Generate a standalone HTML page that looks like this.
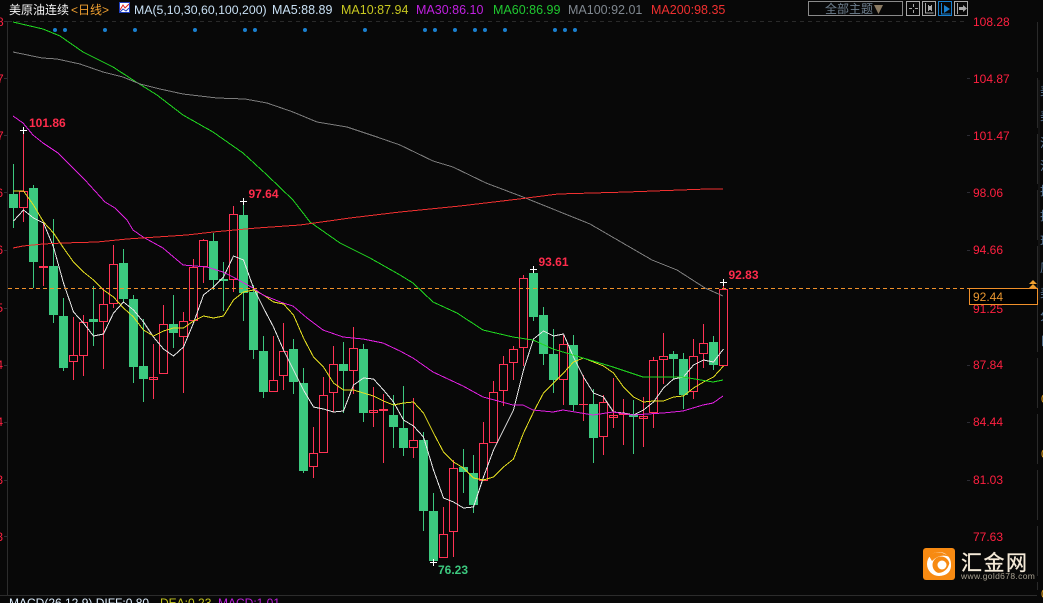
<!DOCTYPE html>
<html><head><meta charset="utf-8"><style>
html,body{margin:0;padding:0;background:#080808;width:1043px;height:603px;overflow:hidden}
svg{display:block;font-family:"Liberation Sans","Noto Sans CJK SC",sans-serif}
.ax{fill:#ff2040;font-size:12px}
.bl{fill:#ff2c4c;font-size:12px;font-weight:bold}
.h{font-size:12.5px}
.cj{font-size:12px;fill:#5a7a9a}
</style></head><body>
<svg width="1043" height="603" viewBox="0 0 1043 603" xmlns="http://www.w3.org/2000/svg">
<rect width="1043" height="603" fill="#080808"/>
<g shape-rendering="crispEdges">
<path d="M7.5 21V595" stroke="#2c2c2c" fill="none"/>
<path d="M0 595.5H1037" stroke="#2c2c2c" fill="none"/>
<path d="M8 21.5H968" stroke="#2a2a2a" stroke-dasharray="4 4" fill="none"/>
<path d="M1037.5 22V590" stroke="#2a2a2a" stroke-dasharray="50 6" fill="none"/>
<path d="M1039 80V300" stroke="#1c1c1c" fill="none"/>
<path d="M4 21.5h3M4 78.5h3M4 135.5h3M4 192.5h3M4 250.5h3M4 308.5h3M4 365.5h3M4 422.5h3M4 480.5h3M4 536.5h3M967 78.5h3M967 135.5h3M967 192.5h3M967 250.5h3M967 365.5h3M967 422.5h3M967 480.5h3" stroke="#2c2c34" fill="none"/>
<!-- green wicks -->
<path stroke="#3cc97f" fill="none" d="M13.5 164V228M33.5 185V288M53.5 219V323M63.5 298V371M93.5 286V346M123.5 249V302M133.5 295V383M143.5 319V402M173.5 295V348M213.5 233V290M223.5 262V311M243.5 201V321M253.5 285V359M263.5 336V398M293.5 339V394M303.5 368V473M343.5 342V413M363.5 344V422M393.5 395V448M403.5 386V456M423.5 432V531M433.5 493V561M463.5 449V493M473.5 455V513M533.5 269V321M543.5 307V365M553.5 329V393M573.5 335V411M593.5 389V463M633.5 400V454M673.5 351V379M683.5 353V409M713.5 336V370"/>
<!-- green bodies -->
<path fill="#3cc97f" d="M9 194h9v14h-9zM29 188h9v74h-9zM49 266h9v49h-9zM59 316h9v52h-9zM89 319h9v3h-9zM119 263h9v36h-9zM129 299h9v68h-9zM139 366h9v13h-9zM169 324h9v9h-9zM209 241h9v39h-9zM219 279h9v2h-9zM239 215h9v78h-9zM249 292h9v58h-9zM259 351h9v41h-9zM289 349h9v33h-9zM299 383h9v88h-9zM339 364h9v7h-9zM359 349h9v64h-9zM389 415h9v12h-9zM399 428h9v20h-9zM419 440h9v71h-9zM429 511h9v50h-9zM459 467h9v5h-9zM469 473h9v32h-9zM529 273h9v44h-9zM539 315h9v39h-9zM549 354h9v26h-9zM569 345h9v60h-9zM589 404h9v34h-9zM629 414h9v3h-9zM669 354h9v5h-9zM679 359h9v36h-9zM709 342h9v23h-9z"/>
<!-- red wicks -->
<path stroke="#ff3355" fill="none" d="M23.5 130V191M23.5 208V222M43.5 222V286M73.5 317V355M73.5 362V380M83.5 315V322M83.5 356V376M103.5 288V304M103.5 322V369M113.5 245V264M113.5 304V308M153.5 344V399M163.5 305V324M183.5 312V321M183.5 337V393M193.5 259V267M203.5 239V240M203.5 267V283M233.5 206V214M233.5 280V292M273.5 336V380M283.5 323V351M283.5 376V390M313.5 427V453M313.5 467V478M323.5 377V395M333.5 346V364M333.5 393V412M353.5 327V348M353.5 371V394M373.5 387V427M383.5 394V463M413.5 398V440M413.5 448V458M443.5 507V534M453.5 460V468M453.5 532V557M483.5 422V443M493.5 381V392M503.5 356V364M503.5 391V406M513.5 346V349M513.5 363V380M523.5 275V278M523.5 348V366M563.5 335V344M563.5 380V405M583.5 375V421M603.5 395V402M603.5 437V455M613.5 378V428M623.5 399V445M643.5 397V447M653.5 357V360M653.5 413V428M663.5 333V356M663.5 359V384M693.5 339V356M693.5 392V399M703.5 324V343M703.5 354V368M723.5 282V289"/>
<!-- red hollow bodies -->
<path stroke="#ff3355" fill="none" d="M19.5 191.5h8v16h-8zM69.5 355.5h8v6h-8zM79.5 322.5h8v33h-8zM99.5 304.5h8v17h-8zM109.5 264.5h8v39h-8zM149.5 377.5h8v2h-8zM159.5 324.5h8v49h-8zM179.5 321.5h8v15h-8zM189.5 267.5h8v53h-8zM199.5 240.5h8v26h-8zM229.5 214.5h8v65h-8zM269.5 380.5h8v11h-8zM279.5 351.5h8v24h-8zM309.5 453.5h8v13h-8zM319.5 395.5h8v57h-8zM329.5 364.5h8v28h-8zM349.5 348.5h8v22h-8zM369.5 410.5h8v2h-8zM379.5 409.5h8v1h-8zM409.5 440.5h8v7h-8zM439.5 534.5h8v23h-8zM449.5 468.5h8v63h-8zM479.5 443.5h8v37h-8zM489.5 392.5h8v50h-8zM499.5 364.5h8v26h-8zM509.5 349.5h8v13h-8zM519.5 278.5h8v69h-8zM559.5 344.5h8v35h-8zM599.5 402.5h8v34h-8zM609.5 415.5h8v2h-8zM639.5 416.5h8v2h-8zM649.5 360.5h8v52h-8zM659.5 356.5h8v3h-8zM689.5 356.5h8v35h-8zM699.5 343.5h8v10h-8zM719.5 289.5h8v76h-8z"/>
<!-- red filled thin -->
<path fill="#ff3355" d="M39 266h9v2h-9zM579 404h9v1h-9zM619 413h9v2h-9z"/>
<!-- MA lines -->
<g fill="none">
<polyline stroke="#e8e8e8" points="13.5,221 23.5,210 33.5,218 43.5,223 53.5,247 63.5,283 73.5,312 83.5,323 93.5,336 103.5,334 113.5,313 123.5,302 133.5,310 143.5,322 153.5,337 163.5,349 173.5,356 183.5,347 193.5,323 203.5,295 213.5,287 223.5,277 233.5,256 243.5,260 253.5,288 263.5,308 273.5,327 283.5,350 293.5,370 303.5,390 313.5,407 323.5,409 333.5,412 343.5,411 353.5,385 363.5,378 373.5,379 383.5,390 393.5,402 403.5,420 413.5,426 423.5,437 433.5,470 443.5,498 453.5,502 463.5,508 473.5,507 483.5,477 493.5,450 503.5,430 513.5,410 523.5,370 533.5,339 543.5,331 553.5,336 563.5,334 573.5,357 583.5,377 593.5,393 603.5,397 613.5,412 623.5,413 633.5,415 643.5,410 653.5,402 663.5,388 673.5,379 683.5,377 693.5,365 703.5,360 713.5,362 723.5,349"/>
<polyline stroke="#e6e020" points="13.5,191 23.5,191 33.5,205 43.5,222 53.5,233 63.5,248 73.5,262 83.5,272 93.5,280 103.5,290 113.5,297 123.5,308 133.5,317 143.5,330 153.5,336 163.5,331 173.5,328 183.5,328 193.5,321 203.5,316 213.5,318 223.5,316 233.5,300 243.5,292 253.5,290 263.5,295 273.5,302 283.5,304 293.5,315 303.5,338 313.5,357 323.5,367 333.5,383 343.5,390 353.5,390 363.5,393 373.5,396 383.5,401 393.5,405 403.5,403 413.5,402 423.5,413 433.5,433 443.5,452 453.5,462 463.5,468 473.5,478 483.5,480 493.5,477 503.5,467 513.5,459 523.5,433 533.5,412 543.5,393 553.5,383 563.5,373 573.5,362 583.5,358 593.5,362 603.5,366 613.5,373 623.5,387 633.5,397 643.5,402 653.5,401 663.5,401 673.5,397 683.5,396 693.5,388 703.5,382 713.5,377 723.5,366"/>
<polyline stroke="#e020e0" points="13,116 23,123 33,135 43,143 58,153 70,165 85,180 105,202 115,208 127,220 133,230 143,237 163,248 183,265 207,267 223,272 233,277 253,288 263,295 283,303 293,306 307,318 323,330 343,337 363,339 383,343 400,351 413,358 433,372 463,386 483,397 513,405 523,405 533,410 553,412 563,410 593,415 613,412 633,415 663,413 683,411 703,405 713,403 723,396"/>
<polyline stroke="#20d820" points="13,22 43,29 60,36 83,52 113,67 133,80 157,95 183,115 213,132 243,153 267,175 293,200 310,222 340,243 370,258 400,275 413,283 433,302 457,313 483,330 513,337 533,340 553,349 583,358 613,367 643,377 683,377 713,382 723,380"/>
<polyline stroke="#7d7d7d" points="13,52 42,58 57,59 80,64 103,72 123,77 140,84 160,89 183,94 217,98 245,99 267,103 293,112 317,122 347,127 377,137 400,145 433,161 453,167 486,183 523,197 590,224 652,260 677,270 705,288 723,296"/>
<polyline stroke="#f03030" points="13,248 23,246 43,244 63,243 97,242 127,239 157,237 187,235 213,232 257,228 300,225 350,218 400,212 460,206 519,199 558,194 627,192 707,189 723,189"/>
</g>
<!-- crosshair marks -->
<path stroke="#fff" fill="none" d="M20 130.5h7M23.5 127v7M240 201.5h7M243.5 198v7M530 269.5h7M533.5 266v7M720 282.5h7M723.5 279v7M430 562.5h7M433.5 559v7"/>
<!-- last price -->
<path stroke="#f0902a" fill="none" stroke-dasharray="4 3" d="M8 288.5H969"/>
</g>
<!-- dots -->
<g fill="#1a80d0"><circle cx="55" cy="30" r="2"/><circle cx="65" cy="30" r="2"/><circle cx="105" cy="30" r="2"/><circle cx="135" cy="30" r="2"/><circle cx="195" cy="30" r="2"/><circle cx="245" cy="30" r="2"/><circle cx="255" cy="30" r="2"/><circle cx="305" cy="30" r="2"/><circle cx="365" cy="30" r="2"/><circle cx="425" cy="30" r="2"/><circle cx="435" cy="30" r="2"/><circle cx="455" cy="30" r="2"/><circle cx="475" cy="30" r="2"/><circle cx="485" cy="30" r="2"/><circle cx="505" cy="30" r="2"/><circle cx="555" cy="30" r="2"/><circle cx="565" cy="30" r="2"/><circle cx="575" cy="30" r="2"/></g>
<!-- left clipped axis labels -->
<svg x="0" y="0" width="4" height="603">
<g class="ax"><text x="-33" y="26">108.28</text><text x="-33" y="83">104.87</text><text x="-33" y="140">101.47</text><text x="-27" y="197">98.06</text><text x="-27" y="254">94.66</text><text x="-27" y="312">91.25</text><text x="-27" y="369">87.84</text><text x="-27" y="426">84.44</text><text x="-27" y="484">81.03</text><text x="-27" y="541">77.63</text></g>
</svg>
<!-- right axis labels -->
<g class="ax"><text x="973" y="26">108.28</text><text x="973" y="83">104.87</text><text x="973" y="140">101.47</text><text x="973" y="197">98.06</text><text x="973" y="254">94.66</text><text x="973" y="313">91.25</text><text x="973" y="369">87.84</text><text x="973" y="426">84.44</text><text x="973" y="484">81.03</text><text x="973" y="541">77.63</text></g>
<rect x="969.5" y="288.5" width="68" height="16" fill="#000" stroke="#f0902a" shape-rendering="crispEdges"/>
<text x="973" y="301" font-size="12" fill="#e8952f">92.44</text>
<path fill="#f0a030" d="M1033 280l4 4h-8zM1033 284l4 4h-8z"/>
<!-- value labels -->
<text class="bl" x="29" y="127">101.86</text>
<text class="bl" x="248.5" y="198">97.64</text>
<text class="bl" x="538.5" y="266">93.61</text>
<text class="bl" x="728.5" y="279">92.83</text>
<text class="bl" x="438" y="574" style="fill:#3cc97f">76.23</text>
<!-- header -->
<text x="9" y="14" font-size="12" fill="#f4f4f4">美原油连续</text>
<text x="71" y="14" font-size="12" fill="#f0a030">&lt;日线&gt;</text>
<rect x="119.5" y="2.5" width="10" height="10" fill="#fff" stroke="#2040c0"/>
<polyline points="120,10 123,5 125,8 129,4" fill="none" stroke="#e02020"/>
<polyline points="120,12 123,9 126,11 129,8" fill="none" stroke="#2040c0"/>
<text x="134" y="14" font-size="12.3" fill="#c8e0f4">MA(5,10,30,60,100,200)</text>
<text class="h" x="272" y="14" fill="#c8e0f4">MA5:88.89</text>
<text class="h" x="341" y="14" fill="#c8c820">MA10:87.94</text>
<text class="h" x="416" y="14" fill="#c020e0">MA30:86.10</text>
<text class="h" x="493" y="14" fill="#20c830">MA60:86.99</text>
<text class="h" x="568" y="14" fill="#808890">MA100:92.01</text>
<text class="h" x="651" y="14" fill="#f03030">MA200:98.35</text>
<!-- toolbar -->
<g shape-rendering="crispEdges" fill="none">
<rect x="808.5" y="1.5" width="94" height="14" stroke="#8a8a8a"/>
<rect x="906.5" y="1.5" width="13" height="14" stroke="#a8a8a8"/>
<rect x="922.5" y="1.5" width="13" height="14" stroke="#a8a8a8"/>
<rect x="938.5" y="1.5" width="13" height="14" stroke="#1880d0"/>
<rect x="954.5" y="1.5" width="13" height="14" stroke="#a8a8a8"/>
<path stroke="#a8a8a8" d="M913.5 4v3M913.5 10v3M909 8.5h3M915 8.5h3M925.5 3v10h8M928.5 5v6M931.5 5v6"/>
<path stroke="#a8a8a8" d="M957.5 3v11"/>
<path stroke="#1880d0" d="M941.5 3v11h9"/>
</g>
<path fill="#1880d0" d="M944 5l6 4-6 4z"/>
<path fill="#a8a8a8" d="M929 6h2v4h-2zM959 7h4V5l4 3.5-4 3.5v-2h-4z"/>
<text x="825" y="13" font-size="12" fill="#6f8090">全部主题</text>
<path fill="#8a7a62" d="M874 5h9l-4.500 9z"/>
<!-- right panel fragments -->
<g class="cj"><text x="1040" y="95">美</text><text x="1040" y="120">美</text><text x="1040" y="147">油</text><text x="1040" y="170">油</text><text x="1040" y="195">技</text><text x="1040" y="220">技</text><text x="1040" y="245">现</text><text x="1040" y="272">原</text><text x="1040" y="297">美</text><text x="1040" y="320">分</text><text x="1040" y="345">日</text></g>
<g font-size="12" fill="#e0a020"><text x="1041" y="403">0</text><text x="1041" y="458">0</text><text x="1041" y="598">0</text></g>
<!-- logo -->
<rect x="923" y="548" width="32" height="32" rx="3" fill="#f78a12"/>
<circle cx="939" cy="564" r="12" fill="#fff"/>
<circle cx="941" cy="565" r="8.500" fill="#f78a12"/>
<path d="M929 556 Q938 548 950 557 Q940 553 932 561z" fill="#f78a12"/>
<path d="M950 562 A9.500 9.500 0 0 1 934 572 A11 11 0 0 0 948 567z" fill="#fff"/>
<circle cx="942" cy="565" r="4.500" fill="#fff"/>
<text x="961" y="570" font-size="21" fill="#f5ead8" stroke="#f5ead8" stroke-width=".3" letter-spacing="1.500">汇金网</text>
<text x="961" y="579" font-size="8.500" fill="#a8a090" letter-spacing=".35">www.gold678.com</text>
<!-- bottom indicator -->
<text x="9" y="607" font-size="12" fill="#e0f0ff">MACD(26,12,9) DIFF:0.80</text>
<text x="160" y="607" font-size="12" fill="#c8c820">DEA:0.23</text>
<text x="218" y="607" font-size="12" fill="#c020e0">MACD:1.01</text>
</svg>
</body></html>
